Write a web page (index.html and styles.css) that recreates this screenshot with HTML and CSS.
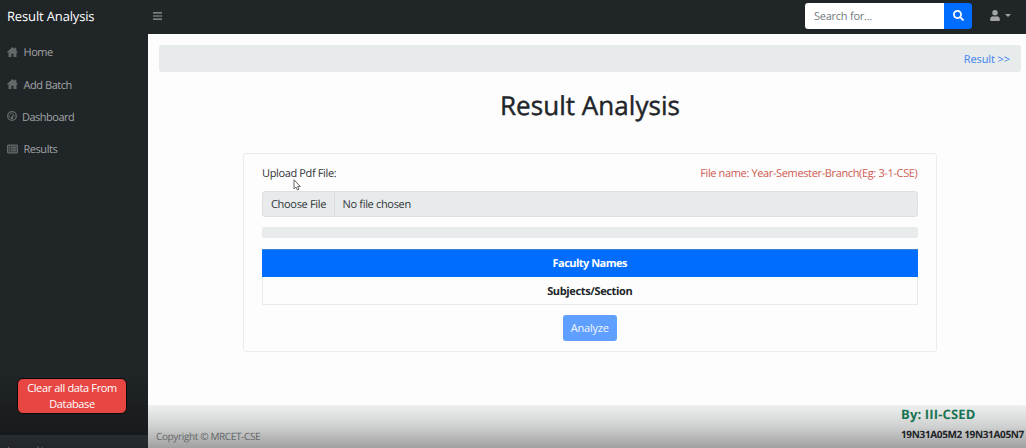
FILE: index.html
```html
<!DOCTYPE html>
<html lang="en">
<head>
<meta charset="utf-8">
<title>Result Analysis</title>
<link rel="stylesheet" href="styles.css">
</head>
<body>
<div class="app">
  <header class="topbar">
    <a class="brand">Result Analysis</a>
    <svg class="menu-icon" viewBox="0 0 9 8"><path d="M0 .8h9M0 4h9M0 7.2h9" stroke="currentColor" stroke-width="1.2"/></svg>
    <div class="search">
      <div class="search-field"><span>Search for...</span></div>
      <button class="search-button"><svg viewBox="0 0 512 512"><path fill="currentColor" d="M505 442.700 405.300 343c-4.500-4.500-10.600-7-17-7H372c27.600-35.300 44-79.700 44-128C416 93.100 322.900 0 208 0S0 93.100 0 208s93.100 208 208 208c48.300 0 92.700-16.400 128-44v16.300c0 6.400 2.500 12.500 7 17l99.700 99.700c9.400 9.400 24.600 9.400 33.900 0l28.300-28.300c9.400-9.400 9.400-24.600.1-34zM208 336c-70.700 0-128-57.200-128-128 0-70.700 57.200-128 128-128 70.700 0 128 57.200 128 128 0 70.700-57.200 128-128 128z"/></svg></button>
    </div>
    <div class="user">
      <svg class="user-icon" viewBox="0 0 448 512"><path fill="currentColor" d="M224 256a128 128 0 1 0 0-256 128 128 0 0 0 0 256zm90 32h-17a174 174 0 0 1-146 0h-17C60 288 0 348 0 422v42c0 27 21 48 48 48h352c27 0 48-21 48-48v-42c0-74-60-134-134-134z"/></svg>
      <span class="caret"></span>
    </div>
  </header>
  <aside class="sidebar">
    <nav class="nav">
      <a class="nav-item"><svg viewBox="0 0 11 10"><path fill="currentColor" d="M5.500 0 0 4.900l.7.800.8-.6V10h3V6.700h2V10h3V5.100l.8.600.7-.8-1.700-1.500V.8H7.600v1.100z"/></svg><span>Home</span></a>
      <a class="nav-item"><svg viewBox="0 0 11 10"><path fill="currentColor" d="M5.500 0 0 4.900l.7.800.8-.6V10h3V6.700h2V10h3V5.100l.8.600.7-.8-1.700-1.500V.8H7.600v1.100z"/></svg><span>Add Batch</span></a>
      <a class="nav-item nav-round"><svg viewBox="0 0 10 10"><circle cx="5" cy="5" r="4.300" fill="none" stroke="currentColor" stroke-width="1.300"/><path d="M2.300 5.800V4.500M3.300 2.700l.7.700M5 2v1M7.700 5.500v-1M4.900 6.800l1.700-3.600" fill="none" stroke="currentColor" stroke-width="1.200"/><circle cx="4.900" cy="7" r="1.400" fill="currentColor"/></svg><span>Dashboard</span></a>
      <a class="nav-item"><svg viewBox="0 0 11 10"><rect x=".6" y="1.100" width="9.800" height="7.800" rx=".8" fill="currentColor" fill-opacity=".35" stroke="currentColor" stroke-width="1.200"/><path d="M2 3.200h1M2 5h1M2 6.800h1M4 3.200h5M4 5h5M4 6.800h5" stroke="currentColor" stroke-width="1.100"/></svg><span>Results</span></a>
    </nav>
    <button class="clear-button"><span>Clear all data From</span><span>Database</span></button>
    <div class="session">Logged in as:</div>
  </aside>
  <main class="main">
    <div class="breadcrumb"><a>Result &gt;&gt;</a></div>
    <h1 class="title">Result Analysis</h1>
    <section class="card">
      <div class="labels"><label>Upload Pdf File:</label><span class="hint">File name: Year-Semester-Branch(Eg: 3-1-CSE)</span></div>
      <div class="file"><span class="choose">Choose File</span><span class="chosen">No file chosen</span></div>
      <div class="progress"></div>
      <div class="table">
        <div class="table-head"><span>Faculty Names</span></div>
        <div class="table-row"><span>Subjects/Section</span></div>
      </div>
      <button class="analyze"><span>Analyze</span></button>
    </section>
    <footer class="footer">
      <span class="copyright">Copyright © MRCET-CSE</span>
      <div class="credits"><strong class="by">By: III-CSED</strong><strong class="rolls">19N31A05M2 19N31A05N7</strong></div>
    </footer>
  </main>
  <svg class="cursor" viewBox="0 0 8 12"><path d="M1 .8v9l2-1.700L4.400 11l1.500-.7-1.300-2.800h2.700z" fill="#fff" stroke="#555" stroke-width=".9"/></svg>
</div>
</body>
</html>
```
FILE: styles.css
```css
* { box-sizing: border-box; }
body { margin: 0; font: 11px/16px "Open Sans", "Noto Sans", sans-serif; color: #303538; letter-spacing: -.36px; text-rendering: geometricPrecision; }
button { font: inherit; letter-spacing: inherit; border: 0; padding: 0; }
svg { display: block; flex: none; }
span, a, label, strong { white-space: nowrap; }
.app { position: relative; width: 1026px; height: 448px; overflow: hidden; display: grid; grid-template: 34px 414px / 148px 878px; background: #fdfdfd; }
.topbar { grid-column: 1 / 3; background: #202528; display: flex; align-items: center; padding-bottom: 3px; }
.brand { width: 153px; padding-left: 7px; font-size: 13px; color: #fff; letter-spacing: -.15px; }
.menu-icon { width: 9px; height: 8px; color: #9a9c9e; }
.search { margin-left: auto; display: flex; width: 167px; height: 26px; border-radius: 3px; overflow: hidden; }
.search-field { width: 139px; background: #fff; color: #747a80; padding: 6px 9px; letter-spacing: -.25px; }
.search-button { width: 28px; background: #006dff; color: #fff; display: grid; place-items: center; }
.search-button svg { width: 11px; height: 11px; }
.user { width: 54px; padding-left: 18px; display: flex; align-items: center; gap: 5px; color: #a1a3a4; }
.user-icon { width: 10px; height: 11px; }
.caret { border: 3px solid transparent; border-top-color: currentColor; border-bottom: 0; }
.sidebar { display: flex; flex-direction: column; overflow: hidden; background: linear-gradient(#202528 0 340px, #171a1c 401px); }
.nav { padding: 3px 0 0 7px; color: #a2a4a6; letter-spacing: -.45px; }
.nav-item { display: flex; align-items: center; height: 32.400px; gap: 5.500px; }
.nav-item svg { width: 11px; height: 10px; margin-bottom: 3px; color: #66696b; }
.nav-round { gap: 5px; letter-spacing: -.5px; }
.nav-item.nav-round svg { width: 10px; }
.clear-button { width: 110px; height: 36px; margin: 211.500px 0 0 17px; border: 1.500px solid #090909; border-radius: 6px; background: #e84643; color: #fff; display: flex; flex-direction: column; align-items: center; padding-top: 1px; flex: none; }
.session { margin-top: 20.500px; height: 13px; overflow: hidden; padding: 7px 7px 0; background: linear-gradient(#272c30, #222629); color: #777; font-size: 10px; flex: none; }
.main { display: flex; flex-direction: column; min-width: 0; }
.breadcrumb { margin: 11px 5px 0 11px; height: 26.500px; border-radius: 3px; background: #e7ebeb; text-align: right; padding: 7px 11px; color: #3d7ff0; letter-spacing: -.1px; }
.title { margin: 16px 0 0 6px; text-align: center; font-size: 26px; line-height: 34px; font-weight: 500; color: #212529; letter-spacing: .05px; -webkit-text-stroke: .45px #212529; }
.card { margin: 31px 89px 0 95px; height: 199px; border: 1px solid #ebecec; border-radius: 3px; padding: 12px 18.500px 0 18px; display: flex; flex-direction: column; flex: none; }
.labels { display: flex; justify-content: space-between; height: 25px; }
.hint { color: #cf5b52; }
.file { height: 26px; border: 1px solid #dde0e1; border-radius: 3px; background: #e7ebeb; display: flex; line-height: 26px; letter-spacing: -.32px; }
.choose { width: 72px; padding-left: 8px; border-right: 1px solid #dadddf; }
.chosen { padding-left: 7.500px; }
.progress { margin-top: 10px; height: 11px; border-radius: 2px; background: #e7ebeb; }
.table { margin-top: 11px; height: 56px; border: 1px solid #e8eaeb; border-top: 0; text-align: center; font-weight: 700; color: #212529; }
.table-head { height: 28px; margin: 0 -1px; background: #006dff; border-top: 1px solid #3d80c9; color: #fff; line-height: 28px; letter-spacing: -.52px; }
.table-row { line-height: 29px; }
.analyze { align-self: center; margin-top: 10.500px; width: 54px; height: 26px; border-radius: 3px; background: #5f9fff; color: #f3f7ff; letter-spacing: -.2px; }
.footer { margin-top: auto; height: 43px; flex: none; background: linear-gradient(#eff1f0, #cfd0d0 50%, #a0a0a0); display: flex; justify-content: space-between; padding-left: 8px; }
.copyright { padding-top: 23px; font-size: 10px; color: #63686a; }
.credits { width: 125px; color: #202326; display: flex; flex-direction: column; }
.by { font-size: 13px; line-height: 18px; color: #187452; letter-spacing: .15px; }
.rolls { font-size: 10px; line-height: 16px; margin-top: 3px; letter-spacing: -.35px; }
.cursor { position: absolute; left: 293px; top: 179px; width: 8px; height: 12px; }
```
